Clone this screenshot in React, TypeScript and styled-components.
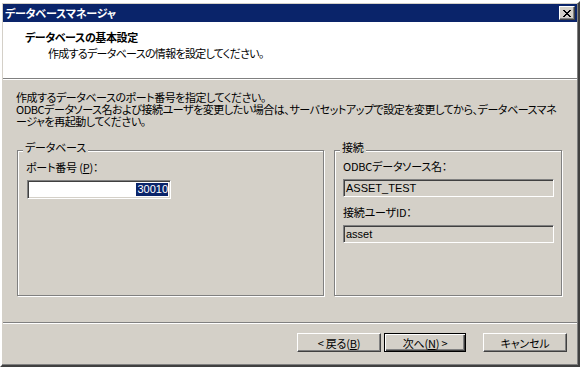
import styled, { createGlobalStyle } from "styled-components";

const GlobalStyle = createGlobalStyle`
  html, body {
    margin: 0;
    padding: 0;
    background: #ffffff;
  }
  body {
    font-family: "Noto Sans CJK JP", "Liberation Sans", sans-serif;
    font-size: 11px;
    letter-spacing: -0.2px;
    font-feature-settings: "palt";
    color: #000000;
  }
`;

const Window = styled.div`
  box-sizing: border-box;
  margin-top: 1px;
  width: 580px;
  height: 366px;
  display: flex;
  flex-direction: column;
  background: #d4d0c8;
  padding: 1px;
  border-style: solid;
  border-width: 2px;
  border-color: #ffffff #404040 #404040 #ffffff;
  box-shadow: inset -1px -1px 0 #808080;
`;

const TitleBar = styled.div`
  height: 18px;
  flex: none;
  display: flex;
  align-items: center;
  justify-content: space-between;
  background: #0a246a;
  padding: 0 2px 0 2px;
`;

const TitleText = styled.span`
  color: #ffffff;
  font-weight: bold;
  line-height: 18px;
  white-space: nowrap;
`;

const CloseButton = styled.div`
  box-sizing: border-box;
  width: 16px;
  height: 14px;
  background: #d4d0c8;
  border-style: solid;
  border-width: 1px;
  border-color: #ffffff #404040 #404040 #ffffff;
  box-shadow: inset -1px -1px 0 #808080;
  display: flex;
  align-items: center;
  justify-content: center;
`;

const Header = styled.div`
  flex: none;
  height: 57px;
  box-sizing: border-box;
  background: #ffffff;
  padding: 8px 0 0 22px;
  border-bottom: 1px solid #808080;
  box-shadow: 0 1px 0 #ffffff;
  margin-bottom: 1px;
`;

const HeaderTitle = styled.div`
  font-weight: bold;
  line-height: 14px;
  letter-spacing: -0.4px;
  white-space: nowrap;
`;

const HeaderSub = styled.div`
  padding-left: 23px;
  margin-top: 2px;
  line-height: 14px;
  letter-spacing: -0.7px;
  white-space: nowrap;
`;

const Body = styled.div`
  flex: 1;
  display: flex;
  flex-direction: column;
  padding: 11px 14px 0 13px;
`;

const Intro = styled.p`
  margin: 0;
  line-height: 12px;
  letter-spacing: -0.45px;
  white-space: nowrap;
`;

const Groups = styled.div`
  display: grid;
  grid-template-columns: 307px 228px;
  column-gap: 10px;
  margin-top: 14px;
  padding-left: 1px;
`;

const Group = styled.fieldset`
  box-sizing: border-box;
  height: 155px;
  margin: 0;
  padding: 0 8px;
  border: 1px solid #808080;
  box-shadow: inset 1px 1px 0 #ffffff, 1px 1px 0 #ffffff;
  min-width: 0;
`;

const Legend = styled.legend`
  padding: 0 2px 6px 2px;
  margin-left: -3px;
  line-height: 12px;
  background: linear-gradient(#d4d0c8, #d4d0c8) top / 100% 12px no-repeat;
`;

const FieldLabel = styled.div<{ $gap?: number }>`
  line-height: 12px;
  margin-top: ${(p) => p.$gap ?? 0}px;
  white-space: nowrap;
`;

const PortInput = styled.div`
  box-sizing: border-box;
  width: 144px;
  height: 19px;
  margin-top: 7px;
  margin-left: 1px;
  background: #ffffff;
  border-style: solid;
  border-width: 1px;
  border-color: #808080 #ffffff #ffffff #808080;
  box-shadow: inset 1px 1px 0 #404040, inset -1px -1px 0 #d4d0c8;
  display: flex;
  align-items: center;
  justify-content: flex-end;
  padding-right: 2px;
  font-family: "Liberation Sans", sans-serif;
  letter-spacing: 0;
`;

const Selected = styled.span`
  background: #0a246a;
  color: #ffffff;
  line-height: 13px;
  padding: 0 0 0 1px;
`;

const ReadOnlyField = styled.div`
  box-sizing: border-box;
  width: 211px;
  height: 18px;
  margin-top: 7px;
  background: #d4d0c8;
  border-style: solid;
  border-width: 1px;
  border-color: #808080 #ffffff #ffffff #808080;
  box-shadow: inset 1px 1px 0 #404040, inset -1px -1px 0 #d4d0c8;
  display: flex;
  align-items: center;
  padding-left: 2px;
  font-family: "Liberation Sans", sans-serif;
  letter-spacing: 0;
  white-space: nowrap;
`;

const Footer = styled.div`
  flex: none;
  height: 41px;
  border-top: 1px solid #808080;
  box-shadow: inset 0 1px 0 #ffffff;
  display: flex;
  justify-content: flex-end;
  align-items: flex-start;
  padding: 10px 10px 0 0;
  box-sizing: border-box;
  margin-bottom: 1px;
`;

const Button = styled.div<{ $default?: boolean; $gap?: number }>`
  box-sizing: border-box;
  width: ${(p) => (p.$default ? 82 : 84)}px;
  height: 19px;
  margin-left: ${(p) => p.$gap ?? 0}px;
  display: flex;
  align-items: center;
  justify-content: center;
  background: #d4d0c8;
  border-style: solid;
  border-width: 1px;
  border-color: ${(p) =>
    p.$default ? "#000000" : "#ffffff #404040 #404040 #ffffff"};
  box-shadow: ${(p) =>
    p.$default
      ? "inset 1px 1px 0 #ffffff, inset -1px -1px 0 #404040, inset -2px -2px 0 #808080"
      : "inset -1px -1px 0 #808080"};
  white-space: nowrap;
  line-height: 12px;
`;

const U = styled.span`
  text-decoration: underline;
`;

function CloseIcon() {
  return (
    <svg width="8" height="7" viewBox="0 0 8 7">
      <path
        d="M0 0h2v1h1v1h2V1h1V0h2v1H7v1H6v1H5v1h1v1h1v1h1v1H6V6H5V5H3v1H2v1H0V6h1V5h1V4h1V3H2V2H1V1H0z"
        fill="#000000"
      />
    </svg>
  );
}

export default function App() {
  return (
    <>
      <GlobalStyle />
      <Window>
        <TitleBar>
          <TitleText>データベースマネージャ</TitleText>
          <CloseButton>
            <CloseIcon />
          </CloseButton>
        </TitleBar>
        <Header>
          <HeaderTitle>データベースの基本設定</HeaderTitle>
          <HeaderSub>作成するデータベースの情報を設定してください。</HeaderSub>
        </Header>
        <Body>
          <Intro>
            作成するデータベースのポート番号を指定してください。
            <br />
            ODBCデータソース名および接続ユーザを変更したい場合は、サーバセットアップで設定を変更してから、データベースマネ
            <br />
            ージャを再起動してください。
          </Intro>
          <Groups>
            <Group>
              <Legend>データベース</Legend>
              <FieldLabel $gap={2}>
                ポート番号 (<U>P</U>)：
              </FieldLabel>
              <PortInput>
                <Selected>30010</Selected>
              </PortInput>
            </Group>
            <Group>
              <Legend>接続</Legend>
              <FieldLabel $gap={1}>ODBCデータソース名：</FieldLabel>
              <ReadOnlyField>ASSET_TEST</ReadOnlyField>
              <FieldLabel $gap={9}>接続ユーザID：</FieldLabel>
              <ReadOnlyField>asset</ReadOnlyField>
            </Group>
          </Groups>
        </Body>
        <Footer>
          <Button>
            &lt; 戻る(<U>B</U>)
          </Button>
          <Button $default $gap={3}>
            次へ(<U>N</U>) &gt;
          </Button>
          <Button $gap={17}>キャンセル</Button>
        </Footer>
      </Window>
    </>
  );
}
